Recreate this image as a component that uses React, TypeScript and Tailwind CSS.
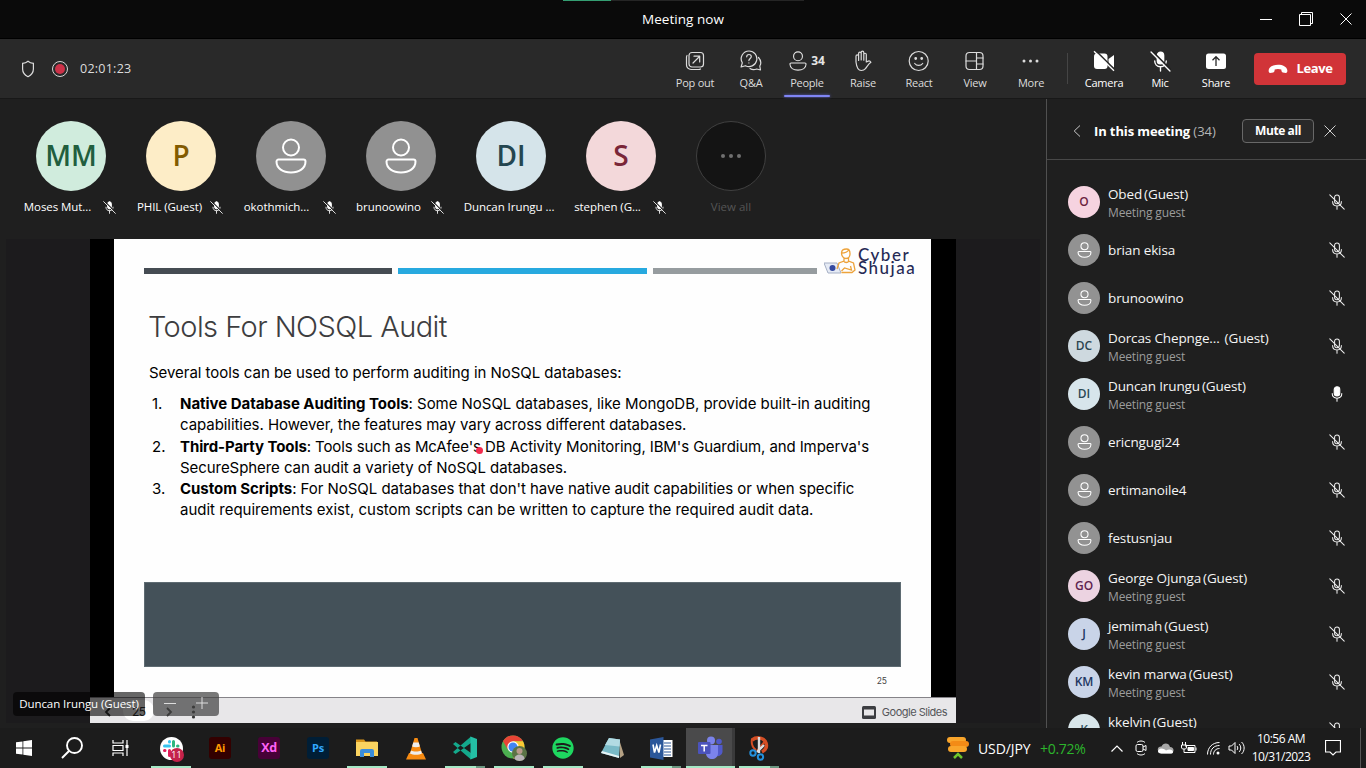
import React from "react";
import { FaSpotify } from "react-icons/fa";

type IconProps = { className?: string };

const PersonIcon = ({ className = "" }: IconProps) => (
  <svg viewBox="0 0 32 36" fill="none" stroke="currentColor" className={className}>
    <circle cx="16" cy="9.5" r="8" />
    <path d="M3.5 21.5h25a2 2 0 0 1 2 2c0 7-6.500 11-14.500 11s-14.500-4-14.500-11a2 2 0 0 1 2-2z" />
  </svg>
);

const MicOff = ({ filled = false, className = "" }: IconProps & { filled?: boolean }) => (
  <svg viewBox="0 0 20 20" fill="none" stroke="currentColor" strokeWidth="1.3" strokeLinecap="round" className={className}>
    <rect x="7" y="1.200" width="6" height="11" rx="3" fill={filled ? "currentColor" : "none"} />
    <path d="M4.500 9.500c0 3 2 5.500 5.500 5.500s5.500-2.500 5.500-5.500M10 15V19" />
    {filled && <path d="M3 1l17 17" stroke="#222" strokeWidth="1.600" />}
    <path d="M1 1l18 18" />
  </svg>
);

const MicOn = ({ className = "" }: IconProps) => (
  <svg viewBox="0 0 20 20" fill="none" stroke="currentColor" strokeWidth="1.3" strokeLinecap="round" className={className}>
    <rect x="6.500" y="1" width="7" height="11.500" rx="3.500" fill="currentColor" />
    <path d="M4 9.500c0 3.500 2.200 5.700 6 5.700s6-2.200 6-5.700M10 15.200V19" />
  </svg>
);

const CloseIcon = ({ className = "" }: IconProps) => (
  <svg viewBox="0 0 12 12" fill="none" stroke="currentColor" className={className}>
    <path d="M.5.5l11 11M11.500.5l-11 11" />
  </svg>
);

const line = { viewBox: "0 0 22 22", fill: "none", stroke: "currentColor", strokeWidth: 1.2, strokeLinecap: "round", strokeLinejoin: "round", className: "size-[22px]" } as const;

const PopOut = () => (
  <svg {...line}>
    <rect x="5" y="2.500" width="14.500" height="14.500" rx="3" />
    <path d="M3 5.500c-.4.500-.5 1-.5 2V15a4.500 4.500 0 0 0 4.500 4.500h7.500c1 0 1.500-.1 2-.5M9 13l6.500-6.500M10 6.200h5.700v5.700" />
  </svg>
);
const QA = () => (
  <svg {...line}>
    <path d="M9 1a7.800 7.800 0 1 1-3.600 14.700L1.100 17l1.200-4.200A7.800 7.800 0 0 1 9 1z" />
    <path d="M6.700 6.800c0-3 4.600-3 4.600-.2 0 1.800-2.400 1.900-2.400 4M8.900 12.900v.1M18.500 7.500c2.500 2.800 2.700 6.200 1.300 8.500l.7 4-3.800-1c-2.200 1-4.700.9-6.700-.5" />
  </svg>
);
const Raise = () => (
  <svg {...line}>
    <path d="M4 12V6.200c0-1.700 2.600-1.700 2.600 0V3.500c0-1.800 2.600-1.800 2.600 0v-1c0-1.800 2.600-1.800 2.600 0v2c0-1.700 2.500-1.700 2.500 0V12l2-.9c1-.4 2 .2 2.600 1.200-2.500 1.700-3.700 4.200-5.400 6.300-1.100 1.300-2.600 1.900-4.200 1.900-3.500 0-4.700-3-5.300-8.500zM6.600 6v4.500M9.200 3.500V10M11.800 4v6.200" />
  </svg>
);
const Smile = () => (
  <svg {...line}>
    <circle cx="10.700" cy="11" r="9.500" />
    <path d="M6.700 13.500c2 2.600 6 2.600 8 0" />
    <circle cx="7.700" cy="8.500" r=".8" fill="currentColor" />
    <circle cx="13.700" cy="8.500" r=".8" fill="currentColor" />
  </svg>
);
const View = () => (
  <svg {...line}>
    <rect x="2" y="2.500" width="17" height="17" rx="3.500" />
    <path d="M12.500 2.500v17M2 11h10.500M12.500 8H19M12.500 14H19" />
  </svg>
);
const Dots = () => (
  <svg viewBox="0 0 22 22" fill="currentColor" className="size-[22px]">
    <circle cx="4" cy="11" r="1.500" /><circle cx="10.500" cy="11" r="1.500" /><circle cx="17" cy="11" r="1.500" />
  </svg>
);
const CameraOff = () => (
  <svg viewBox="0 0 22 22" className="size-[22px]">
    <rect x="1" y="3.500" width="13.500" height="15.500" rx="3" fill="#fff" />
    <path d="M15.500 9l5.500-4v13l-5.500-4z" fill="#fff" />
    <path d="M2.500 .5L22 20" stroke="#292929" strokeWidth="1.600" />
    <path d="M1 1.200l20 19.500" stroke="#fff" strokeWidth="1.300" />
  </svg>
);
const ShareIcon = () => (
  <svg viewBox="0 0 22 22" className="size-[22px]">
    <rect x="1" y="3.500" width="20" height="15.500" rx="2.500" fill="#fff" />
    <path d="M11 16V7M7.500 10.200L11 6.700l3.500 3.500" stroke="#292929" strokeWidth="1.300" fill="none" />
  </svg>
);

const tools = [
  { label: "Pop out", icon: <PopOut /> },
  { label: "Q&A", icon: <QA /> },
  { label: "People", icon: null },
  { label: "Raise", icon: <Raise /> },
  { label: "React", icon: <Smile /> },
  { label: "View", icon: <View /> },
  { label: "More", icon: <Dots /> },
];
const devices = [
  { label: "Camera", icon: <CameraOff /> },
  { label: "Mic", icon: <MicOff filled className="size-[21px]" /> },
  { label: "Share", icon: <ShareIcon /> },
];

function TitleBar() {
  return (
    <header className="relative flex h-[39px] items-center justify-end border-b border-black bg-[#0a0a0a] text-white">
      <div className="absolute left-[563px] top-0 flex h-px w-[241px] bg-[#252525]"><div className="w-12 bg-[#349e72]" /></div>
      <h1 className="absolute left-1/2 -translate-x-1/2 whitespace-nowrap text-[13.500px] leading-5 tracking-[0.050px]">Meeting now</h1>
      <div className="flex items-center pr-3.5">
        <div className="mr-[27px] h-px w-3 bg-white" />
        <svg viewBox="0 0 14 14" fill="none" stroke="currentColor" className="mr-[27px] size-3.5"><path d="M.5 2.500h11v11H.5zM2.500 2.500v-2h11v11h-2" /></svg>
        <CloseIcon className="size-3" />
      </div>
    </header>
  );
}

function Toolbar() {
  return (
    <div className="flex h-[60px] border-b border-[#181818] bg-[#292929] text-[11px] text-[#dcdcdc]">
      <div className="flex flex-1 items-center pl-5">
        <svg viewBox="0 0 16 18" fill="none" stroke="currentColor" strokeWidth="1.200" className="h-[18px] w-4"><path d="M8 1.200c1.700 1.500 3.300 2 5.400 2.100v5.700c0 3.500-2 6-5.400 7.700-3.400-1.700-5.400-4.200-5.400-7.700V3.300c2.100-.1 3.700-.6 5.400-2.100z" /></svg>
        <div className="ml-4 flex size-4 items-center justify-center rounded-full border-[1.500px] border-[#d6d6d6]"><div className="size-[10px] rounded-full bg-[#cc3148]" /></div>
        <span className="ml-3 pt-0.5 text-[12.500px] tracking-[0.250px]">02:01:23</span>
      </div>
      <nav className="flex">
        {tools.map((t) => (
          <div key={t.label} className="relative flex w-14 flex-col items-center pt-[11px]">
            {t.icon ?? (
              <div className="flex h-[22px] items-center gap-1 text-xs font-bold text-[#e4e4e4]"><PersonIcon className="h-5 w-[18px] [stroke-width:2]" />34</div>
            )}
            <span className="mt-[3px] whitespace-nowrap leading-4 tracking-[-0.250px]">{t.label}</span>
            {t.label === "People" && <div className="absolute bottom-px h-0.5 w-[46px] rounded bg-[#7f85f5] shadow-[0_0_3px_#5b5fc7]" />}
          </div>
        ))}
      </nav>
      <div className="mx-2 my-3.5 w-px bg-[#454545]" />
      <nav className="flex text-white">
        {devices.map((t) => (
          <div key={t.label} className="flex w-14 flex-col items-center pt-[11px]">
            <div className="flex h-[22px] items-center">{t.icon}</div>
            <span className="mt-[3px] leading-4 tracking-[-0.250px]">{t.label}</span>
          </div>
        ))}
      </nav>
      <button className="ml-2.5 mr-5 mt-3.5 flex h-8 w-[92px] items-center justify-center gap-[9px] rounded bg-[#d13438] text-[13px] font-bold tracking-[-0.400px] text-white">
        <svg viewBox="0 0 20 10" fill="currentColor" className="h-2.5 w-5"><path d="M10 .8c4.800 0 8.800 2 9.300 5.300.2 1.800-.4 3-1.600 2.800l-2.900-.5c-.7-.1-1.200-.6-1.300-1.300l-.2-1.600c-1.800-.8-4.800-.8-6.600 0l-.2 1.600c-.1.7-.6 1.200-1.300 1.300l-2.900.5C1.100 9.100.5 7.900.7 6.100 1.200 2.800 5.200.8 10 .8z" /></svg>
        Leave
      </button>
    </div>
  );
}

const tiles = [
  { name: "Moses Mut...", initials: "MM", color: "bg-[#d0ecdd] text-[#215e3e]", muted: true, gap: "gap-3 pr-0.5" },
  { name: "PHIL (Guest)", initials: "P", color: "bg-[#fdedc7] text-[#835b00]", muted: true, gap: "gap-2 pr-0.5" },
  { name: "okothmich...", initials: "", color: "bg-[#919191] text-white", muted: true, gap: "gap-3.5 pr-0.5" },
  { name: "brunoowino", initials: "", color: "bg-[#919191] text-white", muted: true, gap: "gap-2.5 pr-0.5" },
  { name: "Duncan Irungu ...", initials: "DI", color: "bg-[#d5e4ea] text-[#244650]", muted: false, gap: "pr-1" },
  { name: "stephen (G...", initials: "S", color: "bg-[#f3d8da] text-[#7a2638]", muted: true, gap: "gap-3 pr-0.5" },
];

function Gallery() {
  return (
    <div className="flex h-[139px] pl-4 pt-[22px] text-[11.500px] text-white">
      {tiles.map((t) => (
        <div key={t.name} className="flex w-[110px] flex-col items-center">
          <div className={`flex size-[70px] items-center justify-center rounded-full pb-0.5 text-[28px] font-semibold ${t.color}`}>
            {t.initials || <PersonIcon className="mt-0.5 h-9 w-8 [stroke-width:2]" />}
          </div>
          <div className={`mt-2 flex items-center whitespace-nowrap leading-4 tracking-[-0.060px] ${t.gap}`}>
            {t.name}
            {t.muted && <MicOff filled className="size-[13px]" />}
          </div>
        </div>
      ))}
      <div className="flex w-[110px] flex-col items-center text-[#555]">
        <div className="flex size-[70px] items-center justify-center rounded-full border border-[#404040] bg-[#141414]">
          <svg viewBox="0 0 22 6" fill="#707070" className="h-1.5 w-[22px]"><circle cx="3" cy="3" r="2" /><circle cx="11" cy="3" r="2" /><circle cx="19" cy="3" r="2" /></svg>
        </div>
        <div className="mt-2 leading-4">View all</div>
      </div>
    </div>
  );
}

const items = [
  { n: "1.", term: "Native Database Auditing Tools", a: ": Some NoSQL databases, like MongoDB, provide built-in auditing", b: "capabilities. However, the features may vary across different databases.", ca: "tracking-[-0.035px]", cb: "tracking-[-0.060px]" },
  { n: "2.", term: "Third-Party Tools", a: ": Tools such as McAfee's DB Activity Monitoring, IBM's Guardium, and Imperva's", b: "SecureSphere can audit a variety of NoSQL databases.", ca: "tracking-[-0.100px]", cb: "tracking-[-0.060px]" },
  { n: "3.", term: "Custom Scripts", a: ": For NoSQL databases that don't have native audit capabilities or when specific", b: "audit requirements exist, custom scripts can be written to capture the required audit data.", ca: "tracking-[-0.045px]", cb: "tracking-[0px]" },
];

function Slide() {
  return (
    <div className="relative ml-1.5 h-[484px] w-[1034px] bg-[#1c1b1d] font-['Inter',sans-serif]">
      <div className="ml-[84px] flex h-[484px] w-[866px] flex-col bg-black">
        <div className="relative ml-6 h-[458px] w-[817px] bg-[#fefefe] pl-[30px] pt-[29px] text-black">
          <div className="flex gap-1.5">
            <div className="h-1.5 w-[248px] bg-[#454c53]" />
            <div className="h-1.5 w-[249px] bg-[#27a9df]" />
            <div className="h-1.5 w-[164px] bg-[#969c9f]" />
          </div>
          <div className="absolute right-4 top-2 flex text-[#262a55]">
            <svg viewBox="0 0 34 30" fill="none" className="h-[30px] w-[34px]">
              <path d="M0 16h13l4 10H4z" fill="#e6ebf5" stroke="#a4aec4" />
              <circle cx="8.500" cy="21" r="3" fill="#3348a0" />
              <g stroke="#eda33b" strokeWidth="1.300">
                <path d="M17.500 6c0-3 2-4 5-4 2 0 3.500 1 3.500 4.500 0 3-1.500 5-4 5S17.500 9 17.500 6zM17.500 6c4 0 6-1 7-3M20 11v3l-5 2-2 6M24.500 11v3l5 2 1.500 7-3 2.500H17.500M19.500 14c1.500 2 4 2 5.500 0M26.500 19l1 4-7-2-3 3" />
              </g>
            </svg>
            <div className="mt-[2px] w-[57px] whitespace-nowrap font-['Lato',sans-serif] text-[17px] font-medium leading-[12.500px] tracking-[1.500px]">Cyber<br />Shujaa</div>
          </div>
          <h2 className="ml-1 mt-[33px] whitespace-nowrap text-[29px] font-light leading-10 tracking-[-0.550px] text-[#3d3d3f]">Tools For NOSQL Audit</h2>
          <p className="ml-[5px] mt-[15px] whitespace-nowrap text-[15px] leading-[22px] tracking-[-0.040px]">Several tools can be used to perform auditing in NoSQL databases:</p>
          <ol className="mt-[9px] text-[15px] leading-[21.250px]">
            {items.map((i) => (
              <li key={i.n} className="flex whitespace-nowrap">
                <span className="w-9 pl-2">{i.n}</span>
                <div>
                  <div className={i.ca}><b>{i.term}</b>{i.a}</div>
                  <div className={i.cb}>{i.b}</div>
                </div>
              </li>
            ))}
          </ol>
          <div className="absolute left-[362px] top-[208px] size-[7px] rounded-full bg-[#f32b4e]" />
          <div className="absolute left-[30px] top-[343px] h-[85px] w-[757px] border border-[#5e6b72] bg-[#445159]" />
          <span className="absolute right-[44px] top-[436px] text-[8.500px] leading-3 text-[#444]">25</span>
        </div>
        <div className="flex h-[26px] items-center justify-end border-t border-[#858388] bg-[#e8e7e9] pr-[9px] pt-[3px] text-[#55565a]">
          <svg viewBox="0 0 14 13" className="mr-1.5 h-[13px] w-3.5"><rect width="14" height="13" rx="1.500" fill="#3c3d41" /><path d="M2 3.500h10v6H2z" fill="#e8e7e9" /></svg>
          <span className="text-[11px] tracking-[-0.500px]">Google Slides</span>
        </div>
      </div>
      <div className="absolute left-[84px] top-[459px] flex h-[25px] items-center text-[#333]">
        <svg viewBox="0 0 110 25" fill="none" stroke="currentColor" strokeWidth="1.800" className="absolute left-0 top-0 h-[25px] w-[110px]">
          <rect x="33" y="2" width="31" height="21" rx="10" fill="#fff" stroke="none" />
          <path d="M20 10l-4 4 4 4M77 10l4 4-4 4" />
          <g fill="currentColor" stroke="none"><circle cx="103.500" cy="9" r="1.600" /><circle cx="103.500" cy="14" r="1.600" /><circle cx="103.500" cy="19" r="1.600" /></g>
        </svg>
        <span className="relative ml-[42px] mt-0.5 text-[12px] leading-4 tracking-[-0.600px]">25</span>
      </div>
      <div className="absolute left-[7px] top-[453px] flex gap-2 font-['Open_Sans','Noto_Sans',sans-serif] text-white">
        <div className="flex h-6 w-[132px] items-center justify-center whitespace-nowrap rounded bg-black/60 pb-px text-[11.500px] tracking-[-0.060px]">Duncan Irungu (Guest)</div>
        <div className="flex h-6 w-[66px] items-center justify-between rounded bg-[#3f3f3f]/70 px-[11px] pb-0.5 text-[#ddd]">
          <div className="h-px w-3 bg-current" />
          <svg viewBox="0 0 12 12" stroke="currentColor" className="size-3"><path d="M6 0v12M0 6h12" /></svg>
        </div>
      </div>
    </div>
  );
}

const people = [
  { name: "Obed", guest: true, initials: "O", color: "bg-[#f6d3e0] text-[#6d1f3f]" },
  { name: "brian ekisa" },
  { name: "brunoowino" },
  { name: "Dorcas Chepnge...", wide: true, guest: true, initials: "DC", color: "bg-[#ced9df] text-[#2c4650]" },
  { name: "Duncan Irungu", guest: true, initials: "DI", color: "bg-[#d7e5eb] text-[#2c4a55]", on: true },
  { name: "ericngugi24" },
  { name: "ertimanoile4" },
  { name: "festusnjau" },
  { name: "George Ojunga", guest: true, initials: "GO", color: "bg-[#ecd3e1] text-[#5f2350]" },
  { name: "jemimah", guest: true, initials: "J", color: "bg-[#c9d4e8] text-[#1e3763]" },
  { name: "kevin marwa", guest: true, initials: "KM", color: "bg-[#c9d4e8] text-[#1e3763]" },
  { name: "kkelvin", guest: true, initials: "K", color: "bg-[#d8e5e9] text-[#33545e]" },
];

function People() {
  return (
    <aside className="flex h-[629px] w-[320px] flex-col overflow-hidden border-l border-[#505050] bg-[#1f1f1f]">
      <div className="flex h-[61px] shrink-0 items-center border-b border-[#484848] pl-[26px] pr-[30px] pt-1">
        <svg viewBox="0 0 8 12" fill="none" stroke="#c8c8c8" className="h-3 w-2"><path d="M7 .5L1.200 6 7 11.500" /></svg>
        <h2 className="ml-[13px] whitespace-nowrap pt-px text-[13px] font-bold tracking-[-0.120px] text-white">In this meeting <span className="font-normal tracking-normal text-[#b5b5b5]">(34)</span></h2>
        <button className="ml-auto h-6 w-[72px] rounded border border-[#686868] bg-[#292929] text-[12px] font-bold leading-[22px] tracking-[-0.400px] text-white">Mute all</button>
        <CloseIcon className="ml-2.5 size-3 text-[#d0d0d0]" />
      </div>
      <ul className="flex flex-col pt-[18px]">
        {people.map((p) => (
          <li key={p.name} className="flex h-12 shrink-0 items-center px-[21px]">
            <div className={`flex size-8 shrink-0 items-center justify-center rounded-full text-[12px] font-semibold ${p.color ?? "bg-[#929292] text-white"}`}>
              {p.initials || <PersonIcon className="h-4 w-[15px] [stroke-width:2.400]" />}
            </div>
            <div className={`ml-2 flex-1 whitespace-nowrap ${p.guest ? "pt-[3px]" : ""}`}>
              <div className="text-[13.500px] font-medium leading-[18px] tracking-[-0.130px] text-[#f5f5f5]">{p.name}{p.guest && <span className={p.wide ? "ml-[5px]" : "ml-0.5"}>(Guest)</span>}</div>
              {p.guest && <div className="text-[12px] leading-[19px] tracking-[-0.150px] text-[#9c9c9c]">Meeting guest</div>}
            </div>
            {p.on ? <MicOn className="size-4 text-white" /> : <MicOff className="size-4 text-[#eee]" />}
          </li>
        ))}
      </ul>
    </aside>
  );
}

const SlackIcon = () => (
  <div className="relative size-[23px]">
    <svg viewBox="0 0 23 23" strokeWidth="3" strokeLinecap="round" className="size-[23px]">
      <circle cx="11.500" cy="11.500" r="11.500" fill="#fff" />
      <path d="M9.500 4.500v.5M4.500 9h5" stroke="#36c5f0" />
      <path d="M13.500 4.500V9M18 9h-.5" stroke="#2eb67d" /><path d="M4.500 13.500h.5M9.500 13.500v5" stroke="#e01e5a" />
      <path d="M13.500 13.500H18" stroke="#ecb22e" />
    </svg>
    <span className="absolute -bottom-0.5 left-[10px] flex size-3.5 items-center justify-center rounded-full bg-[#c4224a] text-[9px] text-white">11</span>
  </div>
);
const FolderIcon = () => (
  <svg viewBox="0 0 22 20" className="h-5 w-[22px]"><path d="M0 1.500h8l1.500 2H21V17H0z" fill="#d9961a" /><path d="M0 4h22v14H0z" fill="#fbd460" /><path d="M4 19v-6a2 2 0 0 1 2-2h10a2 2 0 0 1 2 2v6h-4v-4H8v4z" fill="#3b8ddb" /></svg>
);
const VlcIcon = () => (
  <svg viewBox="0 0 20 23" className="h-[23px] w-5"><path d="M3 16h14l3 6.500H0z" fill="#f78b12" /><path d="M8.500 1h3l5 17c-2 2-11 2-13 0z" fill="#f78b12" /><path d="M7.300 5.500h5.400l1.200 4c-2 1-5.800 1-7.800 0zM5 13.500c2.500 1.300 7.500 1.300 10 0l1 3c-3 1.800-9 1.800-12 0z" fill="#eee" /></svg>
);
const CodeIcon = () => (
  <svg viewBox="0 0 24 24" className="size-6"><path d="M0 8l2.500-2L18 17v6.500zM0 16l2.500 2L18 7V.5z" fill="#14a98c" /><path d="M17.500 .5L24 3v18l-6.500 2.500z" fill="#24bfa5" /></svg>
);
const ChromeIcon = () => (
  <svg viewBox="0 0 26 26" className="size-[26px]">
    <circle cx="12" cy="12" r="11.500" fill="#4caf50" /><path d="M2 6.300A11.500 11.500 0 0 1 22 6.300H12L7 14.800z" fill="#e84435" /><path d="M12 6.300h10A11.500 11.500 0 0 1 12 23.500l5-8.700z" fill="#fcc934" />
    <circle cx="12" cy="12" r="5.700" fill="#fff" /><circle cx="12" cy="12" r="4.500" fill="#4285f4" />
    <circle cx="18.500" cy="18.500" r="7.500" fill="#5b7446" /><circle cx="18.500" cy="16" r="3" fill="#b99a8b" /><path d="M13.500 24c0-6 10-6 10 0-2.500 2.500-7.500 2.500-10 0z" fill="#b9b3b6" />
  </svg>
);
const NotepadIcon = () => (
  <svg viewBox="0 0 23 23" className="size-[23px]"><path d="M18 2l5 16-4 3z" fill="#b5a184" /><path d="M8 1l11 1.500L18 21 0 16z" fill="#79bac7" /><path d="M8 1l11 1.500-.4 7L4 8z" fill="#b2dbe3" /><path d="M0 16l18 5 .1-2L1 14z" fill="#e6f3f5" /></svg>
);
const WordIcon = () => (
  <svg viewBox="0 0 23 23" className="size-[23px]"><path d="M12 3h10.500v17H12z" fill="#fff" /><path d="M14 6h7M14 9h7M14 12h7M14 15h7M14 18h7" stroke="#2b579a" strokeWidth="1.200" /><path d="M0 2.500L13.500 0v23L0 20.500z" fill="#2b579a" /><path d="M3 7.500l1.500 8 2.200-7 2.200 7 1.600-8" fill="none" stroke="#fff" strokeWidth="1.600" /></svg>
);
const TeamsIcon = () => (
  <svg viewBox="0 0 25 24" className="h-6 w-[25px]"><circle cx="13" cy="4.500" r="4" fill="#7b83eb" /><circle cx="21" cy="5.500" r="2.800" fill="#5059c9" /><path d="M17 9h7.500v7a4.500 4.500 0 0 1-7.500 3z" fill="#5059c9" /><path d="M8 9h12v8c0 8-12 8-12 0z" fill="#7b83eb" /><rect y="6" width="12.500" height="12" rx="1" fill="#4b53bc" /><path d="M3 9.500h6.500M6.200 9.500V15.500" stroke="#fff" strokeWidth="1.500" /></svg>
);
const SnipIcon = () => (
  <svg viewBox="0 0 20 25" fill="none" className="h-[25px] w-5"><path d="M3 4c4-3 10-3 13 1 3 5 1 9-3 11" stroke="#d44e24" strokeWidth="3.500" /><path d="M3 3c-1 5 0 8 4 11M16 5L8 15" stroke="#d44e24" strokeWidth="2" /><path d="M10 1v16M15 9l-7 7" stroke="#ddd" strokeWidth="2.400" /><circle cx="4" cy="17" r="2.700" stroke="#2491dd" strokeWidth="2" /><circle cx="11.500" cy="21" r="2.700" stroke="#2491dd" strokeWidth="2" /></svg>
);
const Adobe = ({ text, cls }: { text: string; cls: string }) => (
  <div className={`flex size-[22px] items-center justify-center rounded-[3px] font-bold tracking-[-0.300px] ${cls}`}>{text}</div>
);

const apps = [
  { id: "slack", icon: <SlackIcon />, run: true },
  { id: "ai", icon: <Adobe text="Ai" cls="bg-[#330000] text-[11px] text-[#ff9a00]" /> },
  { id: "xd", icon: <Adobe text="Xd" cls="bg-[#470137] text-[12.500px] text-[#ff61f6]" /> },
  { id: "ps", icon: <Adobe text="Ps" cls="bg-[#001e36] text-[11px] text-[#31a8ff]" /> },
  { id: "files", icon: <FolderIcon />, run: true },
  { id: "vlc", icon: <VlcIcon /> },
  { id: "code", icon: <CodeIcon />, run: true, multi: true },
  { id: "chrome", icon: <ChromeIcon />, run: true },
  { id: "spotify", icon: <FaSpotify className="size-[22px] text-[#1ed760]" />, run: true },
  { id: "notepad", icon: <NotepadIcon /> },
  { id: "word", icon: <WordIcon />, run: true, multi: true },
  { id: "teams", icon: <TeamsIcon />, active: true },
  { id: "snip", icon: <SnipIcon />, run: true, multi: true },
];

function Taskbar() {
  return (
    <footer className="flex h-10 items-center bg-[#1c1c1c] text-white">
      <div className="flex w-12 justify-center"><svg viewBox="0 0 16 16" fill="currentColor" className="size-4"><path d="M0 2.300l6.500-.9v6.200H0zM7.300 1.300L16 0v7.600H7.300zM0 8.400h6.500v6.200L0 13.700zM7.300 8.400H16V16l-8.700-1.200z" /></svg></div>
      <div className="flex w-12 justify-center"><svg viewBox="0 0 22 22" fill="none" stroke="currentColor" strokeWidth="1.900" className="size-[22px]"><circle cx="13.500" cy="8.500" r="7.500" /><path d="M8 14l-7 7" /></svg></div>
      <div className="flex w-[50.500px] justify-center"><svg viewBox="0 0 18 16" fill="none" stroke="currentColor" strokeWidth="1.200" className="h-4 w-[18px]"><path d="M1 0v3h10V0M1 16v-3h10v3M1 5.500h10v5H1zM15 0v16" /><path d="M13.500 5h3v3h-3z" fill="currentColor" stroke="none" /></svg></div>
      {apps.map((a) => (
        <div key={a.id} className={`relative flex h-10 w-[49px] items-center justify-center ${a.active ? "border-r-[3px] border-[#3a3a3b] bg-[#4a4a4b] pl-[3px]" : ""}`}>
          {a.icon}
          {(a.run || a.active) && (
            <div className={`absolute bottom-0 flex h-0.5 justify-end bg-[#a5e8c5] ${a.active ? "left-0 w-[49px]" : "w-10"}`}>{a.multi && <div className="w-[9px] bg-[#6c9781]" />}</div>
          )}
        </div>
      ))}
      <div className="ml-auto flex h-10 items-center">
        <svg viewBox="0 0 22 24" className="h-6 w-[22px]"><rect y="1" width="19" height="6" rx="3" fill="#f9a52b" /><rect x="3" y="5" width="19" height="6" rx="3" fill="#f38b16" /><rect x="1" y="10" width="19" height="6" rx="3" fill="#f9a52b" /><path d="M7 22l4-4 4 4" fill="none" stroke="#6fc52d" strokeWidth="2.500" /></svg>
        <span className="ml-[9px] w-[62px] whitespace-nowrap text-[14px] tracking-[-0.100px]">USD/JPY</span>
        <span className="w-[71px] whitespace-nowrap text-[14px] tracking-[-0.300px] text-[#2cb52c]">+0.72%</span>
        <svg viewBox="0 0 12 7" fill="none" stroke="currentColor" strokeWidth="1.200" className="h-[7px] w-3"><path d="M.5 6.500L6 1l5.500 5.500" /></svg>
        <svg viewBox="0 0 12 16" fill="none" stroke="currentColor" className="ml-3 h-4 w-3"><rect x="1" y="4.500" width="7" height="7" rx="1.500" /><path d="M8 7l3-1.500v5L8 9M2 2.500c2-2 6-2 8 0M2 13.500c2 2 6 2 8 0" /></svg>
        <svg viewBox="0 0 17 11" className="ml-2.5 h-[11px] w-[17px]"><path d="M2 9C-1 6 2 3 4.500 3.500 6-.5 12-.5 13 4c4 0 5 5 1 6.500H4z" fill="#a8a8a8" /><path d="M4 10.500c-4 0-4-4 0-5 3 0 4 1 5 2 3-2 7-1 7 1.500 0 1-1 1.500-2 1.500z" fill="#fff" /></svg>
        <svg viewBox="0 0 16 12" fill="none" stroke="currentColor" className="ml-[7px] h-3 w-4"><path d="M4.500 4.500V3.500H14v7H5M15 5.500v3M1.500 0v3M4.500 0v3M.5 3h5v2c0 2-1 2-2.500 2s-2.500 0-2.500-2zM3 7v3.500h2" /><path d="M7 5.500h5.500v3H7z" fill="currentColor" /></svg>
        <svg viewBox="0 0 13 13" fill="none" stroke="currentColor" className="ml-2.5 h-[13px] w-[13px]"><path d="M.5 12.500c0-7 5-12 12-12M3.500 12.500c0-5.500 3.500-9 9-9M6.500 12.500c0-3.500 2.500-6 6-6" /><circle cx="11" cy="11" r="1.500" fill="currentColor" stroke="none" /></svg>
        <svg viewBox="0 0 17 14" fill="none" stroke="currentColor" className="ml-2 h-3.5 w-[17px]"><path d="M1 5h2.500L7 1.500v11L3.500 9H1zM9 5c1 1 1 3 0 4M11 3c2.300 2 2.300 6 0 8M13.500 1c3.500 3 3.500 9 0 12" /></svg>
        <div className="ml-1.5 flex w-[60px] flex-col items-center whitespace-nowrap text-[12px] leading-[18px] tracking-[-0.500px]"><span>10:56 AM</span><span>10/31/2023</span></div>
        <svg viewBox="0 0 16 16" fill="none" stroke="currentColor" strokeWidth="1.200" className="ml-[14px] size-4"><path d="M.5.5h15v11.500H11L8 15l-3-3H.5z" /></svg>
        <div className="ml-[19px] mr-[5px] h-10 w-px bg-[#555]" />
      </div>
    </footer>
  );
}

export default function App() {
  return (
    <div className="h-[768px] w-[1366px] overflow-hidden bg-[#1f1f1f] font-['Open_Sans','Noto_Sans',sans-serif]">
      <TitleBar />
      <Toolbar />
      <div className="flex h-[629px]">
        <main className="w-[1046px]"><Gallery /><div className="pt-px"><Slide /></div></main>
        <People />
      </div>
      <Taskbar />
    </div>
  );
}
